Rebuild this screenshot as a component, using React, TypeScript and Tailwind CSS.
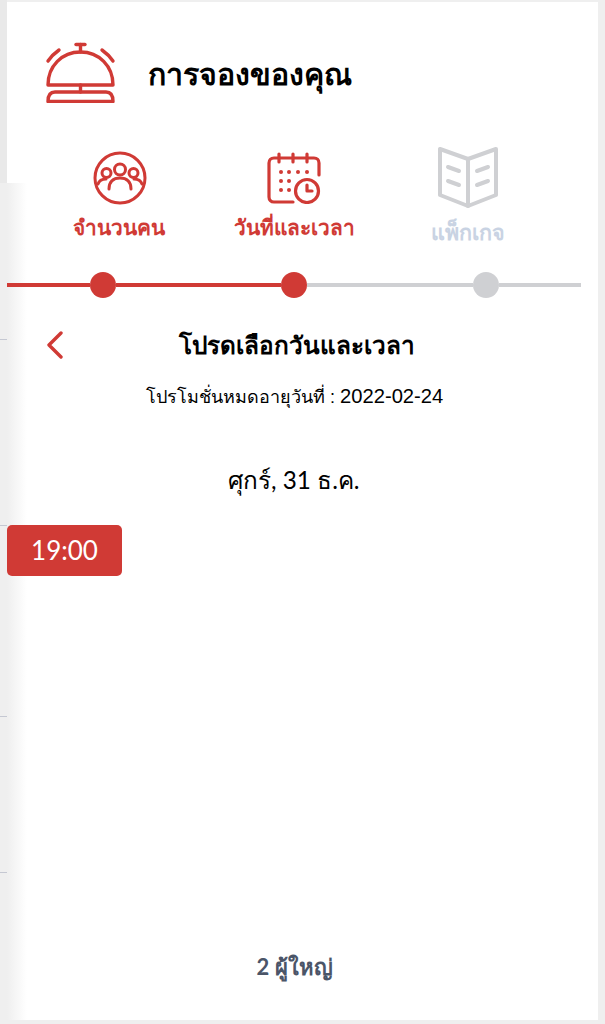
function Bell() {
  return (
    <svg width="72" height="62" viewBox="0 0 72 62" fill="none" stroke="#d03a35" strokeWidth="3.4" strokeLinecap="round" strokeLinejoin="round">
      <path d="M31 3.500h9" />
      <path d="M35.500 3.500v7.500" />
      <path d="M3 44C3 25 17 11 35.500 11S68 25 68 44z" />
      <path d="M3 20Q7 14 14 9" />
      <path d="M68 20Q64 14 57 9" />
      <path d="M35.500 44v7" />
      <path d="M3 60.500c0-6 2-9.500 7-9.500h51c5 0 7 3.500 7 9.500z" />
    </svg>
  );
}

function People() {
  return (
    <svg width="54" height="54" viewBox="0 0 54 54" fill="none" stroke="#d03a35" strokeWidth="3" strokeLinecap="round">
      <circle cx="27" cy="27" r="25" />
      <circle cx="27" cy="18.500" r="5.500" />
      <circle cx="13.500" cy="22" r="4.500" />
      <circle cx="40.500" cy="22" r="4.500" />
      <path d="M16 38c0-7 4-11 11-11s11 4 11 11" />
      <path d="M5 33c1-3 4-5 8-5" />
      <path d="M49 33c-1-3-4-5-8-5" />
    </svg>
  );
}

function Calendar() {
  return (
    <svg width="54" height="52" viewBox="0 0 54 52" fill="none" stroke="#d03a35" strokeWidth="3.200" strokeLinecap="round" strokeLinejoin="round">
      <path d="M26 50H7c-3 0-5-2-5-5V11c0-3 2-5 5-5h40c3 0 5 2 5 5v12" />
      <path d="M12 2v8M26 2v8M40 2v8" />
      <circle cx="40" cy="39" r="11.500" />
      <path d="M40 33v6h5" />
      <g fill="#d03a35" stroke="none">
        <circle cx="14" cy="20" r="2" /><circle cx="22" cy="20" r="2" /><circle cx="31" cy="20" r="2" /><circle cx="40" cy="20" r="2" />
        <circle cx="14" cy="29" r="2" /><circle cx="22" cy="29" r="2" />
        <circle cx="14" cy="38" r="2" /><circle cx="22" cy="38" r="2" />
      </g>
    </svg>
  );
}

function Book() {
  return (
    <svg width="62" height="62" viewBox="0 0 62 62" fill="none" stroke="#cfd0d3" strokeWidth="4" strokeLinecap="round" strokeLinejoin="round">
      <path d="M31 13 3 3v46l28 11 28-11V3z" />
      <path d="M31 13v47" />
      <path d="M11 21l11 4M11 35l11 4M40 25l11-4M40 39l11-4" />
    </svg>
  );
}

export default function App() {
  return (
    <div className="flex h-[1024px] w-[605px] overflow-hidden bg-[#efefef] font-['Lato',sans-serif]">
      <div className="flex w-[7px] shrink-0 flex-col">
        <div className="h-[183px] shrink-0 bg-[#e9e9e9]" />
        <div className="mt-[156px] h-px bg-[#c5c8d2]" />
        <div className="mt-[185px] h-px bg-[#c5c8d2]" />
        <div className="mt-[190px] h-px bg-[#c5c8d2]" />
        <div className="mt-[155px] h-px bg-[#c5c8d2]" />
      </div>
      <div className="flex w-[591px] shrink-0 flex-col">
        <div className="h-[2px] shrink-0" />
        <main className="relative flex h-[1018px] flex-col bg-white">
          <div className="absolute bottom-0 left-0 top-[181px] w-[20px] bg-gradient-to-r from-[#efefef] to-white" />
          <div className="relative flex flex-col">
            <div className="flex h-[140px] items-center pl-[38px]">
              <Bell />
              <h1 className="ml-[31px] mt-[2px] text-[30.300px] font-bold leading-none text-black">การจองของคุณ</h1>
            </div>
            <div className="flex h-[130px] items-start pl-[45px] pt-[9px]">
              <div className="flex w-[134px] flex-col items-center">
                <div className="flex h-[54px] items-center pl-[1px]"><People /></div>
                <span className="mt-[8px] text-[20.800px] font-semibold leading-[28px] text-[#d03a35]">จำนวนคน</span>
              </div>
              <div className="ml-[41px] flex w-[134px] flex-col items-center">
                <div className="flex h-[54px] items-center"><Calendar /></div>
                <span className="mt-[8px] text-[20.800px] font-semibold leading-[28px] text-[#d03a35]">วันที่และเวลา</span>
              </div>
              <div className="ml-[40px] flex w-[134px] flex-col items-center">
                <div className="-mt-[5px] flex h-[54px] items-start"><Book /></div>
                <span className="mt-[18px] text-[21.500px] font-semibold leading-[28px] text-[#c9d3e3]">แพ็กเกจ</span>
              </div>
            </div>
            <div className="flex h-[26px] w-[574px] items-center">
              <div className="h-[4px] w-[83px] bg-[#d03a35]" />
              <div className="h-[26px] w-[26px] shrink-0 rounded-full bg-[#d03a35]" />
              <div className="h-[4px] w-[165px] bg-[#d03a35]" />
              <div className="h-[26px] w-[26px] shrink-0 rounded-full bg-[#d03a35]" />
              <div className="h-[4px] w-[166px] bg-[#cfd0d3]" />
              <div className="h-[26px] w-[26px] shrink-0 rounded-full bg-[#cfd0d3]" />
              <div className="h-[4px] flex-1 bg-[#cfd0d3]" />
            </div>
            <div className="mt-[25px] flex h-[44px] items-center pl-[39px]">
              <svg width="18" height="28" viewBox="0 0 18 28" fill="none" stroke="#d03a35" strokeWidth="3.400" strokeLinecap="round" strokeLinejoin="round">
                <path d="M15 2 3 14l12 12" />
              </svg>
              <h2 className="ml-[115px] text-[24.300px] font-bold leading-none text-black">โปรดเลือกวันและเวลา</h2>
            </div>
            <p className="mt-[17px] pl-[139px] font-['Liberation_Sans',sans-serif] text-[18px] leading-[24px] text-black">โปรโมชั่นหมดอายุวันที่ : <span className="text-[20.200px]">2022-02-24</span></p>
            <p className="mt-[55px] pl-[221px] text-[24.300px] leading-[32px] text-black">ศุกร์, 31 ธ.ค.</p>
            <div className="mt-[29px] flex h-[51px] w-[115px] items-center justify-center rounded-[5px] bg-[#d03a35] text-[26px] text-white">19:00</div>
          </div>
          <div className="relative mt-auto flex h-[112px] items-start justify-center pr-[16px] pt-[45px]">
            <span className="text-[22px] font-bold leading-[28px] text-[#4b5568]">2 ผู้ใหญ่</span>
          </div>
        </main>
      </div>
    </div>
  );
}
